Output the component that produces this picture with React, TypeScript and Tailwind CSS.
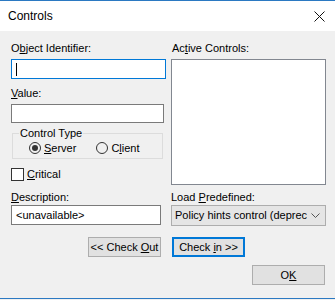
function Label({ children, className = "" }: { children: React.ReactNode; className?: string }) {
  return <div className={`h-[13px] leading-[13px] text-[11px] text-black ${className}`}>{children}</div>;
}

function Button({ children, focused = false }: { children: React.ReactNode; focused?: boolean }) {
  return (
    <div
      className={`flex h-[20px] w-[73px] items-center justify-center bg-[#e1e1e1] text-[11px] text-black ${
        focused ? "border-2 border-[#0078d7]" : "border border-[#adadad]"
      }`}
    >
      <span className="whitespace-pre">{children}</span>
    </div>
  );
}

function Radio({ checked, children }: { checked?: boolean; children: React.ReactNode }) {
  return (
    <div className="flex items-center gap-[3px]">
      <span className="flex h-[12px] w-[12px] items-center justify-center rounded-full border border-[#333333] bg-[#f0f0f0]">
        {checked && <span className="h-[6px] w-[6px] rounded-full bg-[#333333]" />}
      </span>
      <span className="text-[11px] leading-[13px]">{children}</span>
    </div>
  );
}

export default function App() {
  return (
    <div
      className="flex h-[300px] w-[335px] flex-col bg-[#f0f0f0] text-black"
      style={{ fontFamily: '"Liberation Sans", Arial, sans-serif' }}
    >
      <div className="h-px bg-[#2b79c2]" />
      <div className="flex h-[30px] items-center justify-between bg-white pl-[8px] pr-[10px]">
        <span className="text-[12px]">Controls</span>
        <svg width="11" height="11" viewBox="0 0 11 11">
          <path d="M0.5 0.5 L10.5 10.5 M10.5 0.5 L0.5 10.5" stroke="#111" strokeWidth="1" fill="none" />
        </svg>
      </div>

      <div className="flex-1 pl-[11px] pt-[11px]">
        <div className="grid grid-cols-[155px_155px] gap-x-[5px]">
          {/* left column */}
          <div className="flex flex-col">
            <Label>
              O<u>b</u>ject Identifier:
            </Label>
            <div className="mt-[4px] flex h-[20px] w-[155px] items-center border border-[#0078d7] bg-white pl-[4px]">
              <span className="h-[13px] w-px bg-black" />
            </div>
            <Label className="mt-[8px]">
              <u>V</u>alue:
            </Label>
            <div className="mt-[4px] h-[19px] w-[153px] border border-[#7a7a7a] bg-white" />
            <div className="ml-px mt-[10px] h-[26px] w-[151px] border border-[#dcdcdc]">
              <div className="-mt-[7px] ml-[6px] h-[13px] w-fit bg-[#f0f0f0] px-px text-[11px] leading-[13px]">
                Control Type
              </div>
              <div className="ml-[16px] mt-px flex h-[14px] items-center gap-[20px]">
                <Radio checked>
                  <u>S</u>erver
                </Radio>
                <Radio>
                  C<u>l</u>ient
                </Radio>
              </div>
            </div>
            <div className="mt-[9px] flex items-center gap-[3px]">
              <span className="h-[13px] w-[13px] border border-[#333333] bg-white" />
              <span className="text-[11px] leading-[13px]">
                <u>C</u>ritical
              </span>
            </div>
          </div>

          {/* right column */}
          <div className="flex flex-col">
            <Label className="pl-px">
              Ac<u>t</u>ive Controls:
            </Label>
            <div className="mt-[4px] h-[126px] w-[155px] border border-[#828790] bg-white" />
          </div>

          <div className="mt-[6px] flex flex-col">
            <Label>
              <u>D</u>escription:
            </Label>
            <div className="mt-px flex h-[20px] w-[150px] items-center border border-[#7a7a7a] bg-white pl-[4px] text-[11px]">
              &lt;unavailable&gt;
            </div>
          </div>
          <div className="mt-[6px] flex flex-col">
            <Label>
              Load <u>P</u>redefined:
            </Label>
            <div className="mt-px flex h-[21px] w-[155px] items-center border border-[#adadad] bg-[#e5e5e5] pl-[3px] pr-[5px] text-[11px]">
              <span className="min-w-0 flex-1 overflow-hidden whitespace-nowrap">Policy hints control (deprecated)</span>
              <svg width="9" height="5" viewBox="0 0 9 5" className="ml-[4px] shrink-0">
                <path d="M0.5 0.5 L4.5 4.5 L8.5 0.5" stroke="#555" strokeWidth="1" fill="none" />
              </svg>
            </div>
          </div>
        </div>

        <div className="ml-[77px] mt-[11px] flex gap-[11px]">
          <Button>
            &lt;&lt; Check <u>O</u>ut
          </Button>
          <Button focused>
            Check <u>i</u>n &gt;&gt;
          </Button>
        </div>

        <div className="ml-[241px] mt-[8px]">
          <Button>
            O<u>K</u>
          </Button>
        </div>
      </div>

      <div className="h-px bg-[#2b79c2]" />
      <div className="h-px bg-[#f0f0f0]" />
    </div>
  );
}
